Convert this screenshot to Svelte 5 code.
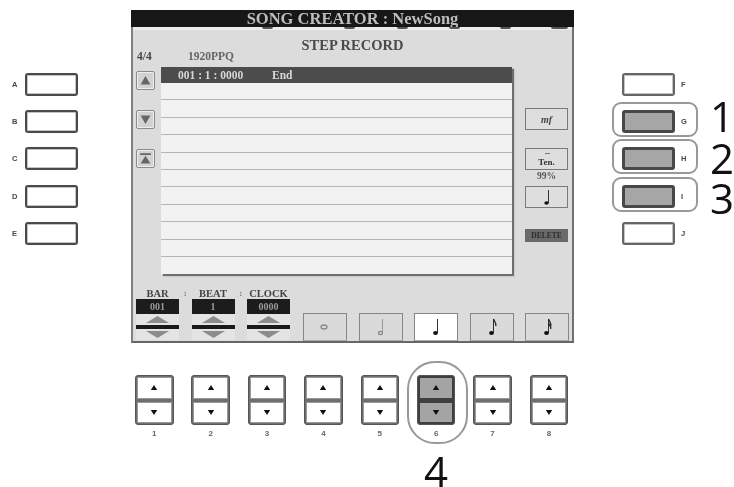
<script>
  const leftKeys = ['A', 'B', 'C', 'D', 'E'];
  const rightKeys = [
    { key: 'F' },
    { key: 'G', step: 1 },
    { key: 'H', step: 2 },
    { key: 'I', step: 3 },
    { key: 'J' }
  ];
  const params = [
    { label: 'BAR', value: '001' },
    { label: 'BEAT', value: '1' },
    { label: 'CLOCK', value: '0000' }
  ];
  const notes = ['whole', 'half', 'quarter', 'eighth', 'sixteenth'];
  const rows = Array.from({ length: 11 });
  const pads = [1, 2, 3, 4, 5, 6, 7, 8];
</script>

<div class="page">
  <div class="top">
    <div class="keys left">
      {#each leftKeys as k}
        <div class="key-row">
          <span class="key-label">{k}</span>
          <span class="key"></span>
        </div>
      {/each}
    </div>

    <div class="screen">
      <div class="title">SONG CREATOR : NewSong</div>
      <div class="tabs">
        <i style="margin-left:129px"></i>
        <i style="margin-left:71px"></i>
        <i style="margin-left:42px"></i>
        <i style="margin-left:41px"></i>
        <i style="margin-left:40px"></i>
        <i style="margin-left:40px;width:17px"></i>
      </div>
      <div class="sub">STEP RECORD</div>
      <div class="meta"><span class="sig">4/4</span><span>1920PPQ</span></div>

      <div class="main">
        <div class="rail-left">
          <button class="arrow" aria-label="up">
            <svg viewBox="0 0 19 19"><path d="M9.5 4.5 15 14H4z" /></svg>
          </button>
          <button class="arrow" aria-label="down">
            <svg viewBox="0 0 19 19"><path d="M4 5h11L9.5 14.5z" /></svg>
          </button>
          <button class="arrow" aria-label="top">
            <svg viewBox="0 0 19 19"><path d="M3.500 3.500h12v2h-12zM9.500 6.500 15 15H4z" /></svg>
          </button>
        </div>

        <div class="list">
          <div class="list-head"><span class="pos">001 : 1 : 0000</span><span>End</span></div>
          {#each rows as _}
            <div class="list-row"></div>
          {/each}
        </div>

        <div class="rail-right">
          <button class="soft mf">mf</button>
          <button class="soft ten"><span class="dash"></span>Ten.</button>
          <div class="pct">99%</div>
          <button class="soft len" aria-label="note length">
            <svg viewBox="0 0 41 20"><path class="stem" d="M22.500 3v13" /><ellipse cx="20.500" cy="16" rx="2.200" ry="1.800" /></svg>
          </button>
          <div class="del">DELETE</div>
        </div>
      </div>

      <div class="bottom">
        {#each params as p, i}
          {#if i > 0}<span class="colon">:</span>{/if}
          <div class="param">
            <div class="param-label">{p.label}</div>
            <div class="param-value">{p.value}</div>
            <div class="spin"><svg viewBox="0 0 43 11"><path d="M21.500 2 33 9H10z" /></svg></div>
            <div class="param-bar"></div>
            <div class="spin"><svg viewBox="0 0 43 11"><path d="M10 2h23L21.500 9z" /></svg></div>
          </div>
        {/each}
        <div class="notes">
          {#each notes as n}
            <div class="note" class:on={n === 'quarter'} class:dim={n === 'whole' || n === 'half'}>
              <svg viewBox="0 0 42 26">
                {#if n === 'whole'}
                  <ellipse class="open" cx="20" cy="13" rx="3" ry="2" />
                {:else}
                  <path class="stem" d="M22.500 5v14" />
                  {#if n === 'half'}
                    <ellipse class="open" cx="20.500" cy="19" rx="2" ry="1.600" />
                  {:else}
                    <ellipse cx="20.500" cy="19" rx="2.400" ry="1.900" />
                  {/if}
                  {#if n === 'eighth' || n === 'sixteenth'}
                    <path class="flag" d="M22.500 5c1 3 3 3.500 2.200 7" />
                  {/if}
                  {#if n === 'sixteenth'}
                    <path class="flag" d="M22.500 9c1 3 3 3 2.200 6" />
                  {/if}
                {/if}
              </svg>
            </div>
          {/each}
        </div>
      </div>
    </div>

    <div class="keys right">
      {#each rightKeys as k}
        <div class="key-row">
          <span class="key" class:active={k.step}></span>
          <span class="key-label">{k.key}</span>
          {#if k.step}
            <span class="ring"></span>
            <span class="step s{k.step}">{k.step}</span>
          {/if}
        </div>
      {/each}
    </div>
  </div>

  <div class="pads">
    {#each pads as n}
      <div class="pad-col">
        <div class="pad" class:active={n === 6}>
          <div class="cell"><svg viewBox="0 0 10 8"><path d="M5 1 9 7H1z" /></svg></div>
          <div class="cell"><svg viewBox="0 0 10 8"><path d="M1 1h8L5 7z" /></svg></div>
        </div>
        <div class="pad-label">{n}</div>
        {#if n === 6}
          <span class="pad-ring"></span>
          <span class="step four">4</span>
        {/if}
      </div>
    {/each}
  </div>
</div>

<style>
  :global(body) {
    margin: 0;
    background: #fff;
  }

  .page {
    width: 734px;
    height: 487px;
    overflow: hidden;
    background: #fff;
    padding-top: 10px;
    box-sizing: border-box;
    font-family: "Liberation Serif", serif;
    filter: blur(0.6px);
  }

  .top {
    display: flex;
  }

  /* side keys */
  .keys {
    display: flex;
    flex-direction: column;
    gap: 14.2px;
    padding-top: 63px;
    box-sizing: border-box;
  }

  .keys.left {
    width: 131px;
    padding-left: 12px;
  }

  .keys.right {
    width: 160px;
    padding-left: 48px;
  }

  .key-row {
    position: relative;
    display: flex;
    align-items: center;
    height: 23px;
  }

  .key {
    width: 53px;
    height: 23px;
    box-sizing: border-box;
    border: 2px solid #4a4a4a;
    border-radius: 3px;
    background: #fff;
    box-shadow: inset 0 0 0 1px #c4c4c4;
  }

  .keys.right .key {
    border-color: #666;
  }

  .keys.right .key.active {
    border: 3px solid #484848;
    background: #a6a6a6;
    box-shadow: none;
  }

  .key-label {
    width: 13px;
    font: bold 7.500px "Liberation Sans", sans-serif;
    color: #444;
  }

  .keys.right .key-label {
    width: auto;
    margin-left: 6px;
  }

  .ring {
    position: absolute;
    left: -10px;
    top: -8px;
    width: 86px;
    height: 35px;
    box-sizing: border-box;
    border: 2px solid #999;
    border-radius: 9px;
  }

  .step {
    position: absolute;
    font: 400 42px/30px "Open Sans", sans-serif;
    color: #111;
  }

  .keys .step {
    left: 88px;
  }

  .s1 {
    top: -9px;
  }

  .s2 {
    top: -4px;
  }

  .s3 {
    top: -2px;
  }

  /* screen */
  .screen {
    width: 443px;
    height: 333px;
    box-sizing: border-box;
    background: #dcdcdc;
    border-left: 2px solid #808080;
    border-right: 2px solid #707070;
    border-bottom: 2px solid #666;
  }

  .title {
    height: 17px;
    margin-left: -2px;
    margin-right: -2px;
    background: #171717;
    color: #bdbdbd;
    font-size: 16.500px;
    font-weight: bold;
    line-height: 17px;
    text-align: center;
    white-space: pre;
  }

  .tabs {
    display: flex;
    height: 3px;
    background: #ececec;
  }

  .tabs i {
    display: block;
    width: 11px;
    height: 2px;
    background: #555;
    border-radius: 0 0 3px 3px;
  }

  .sub {
    margin-top: 8px;
    font-size: 14.500px;
    line-height: 14px;
    font-weight: bold;
    text-align: center;
    color: #4a4a4a;
  }

  .meta {
    display: flex;
    height: 12px;
    margin-top: -2px;
    padding-left: 4px;
    font-size: 11.500px;
    line-height: 12px;
    font-weight: bold;
    color: #666;
  }

  .sig {
    width: 51px;
    color: #444;
  }

  .main {
    display: flex;
    height: 211px;
    margin-top: 5px;
  }

  .rail-left {
    width: 28px;
    box-sizing: border-box;
    padding: 4px 0 0 3px;
    display: flex;
    flex-direction: column;
    gap: 20px;
  }

  .arrow {
    width: 19px;
    height: 19px;
    padding: 0;
    box-sizing: border-box;
    border: 1px solid #8b8b8b;
    border-radius: 2px;
    background: #d2d2d2;
    box-shadow: inset 0 0 0 1px #eee;
  }

  .arrow svg {
    display: block;
    width: 100%;
    height: 100%;
    fill: #666;
  }

  .list {
    width: 351px;
    height: 207px;
    background: #f2f2f2;
    box-shadow: 2px 2px 1px #6f6f6f;
  }

  .list-head {
    display: flex;
    height: 16px;
    background: #4c4c4c;
    color: #d8d8d8;
    font-size: 11.500px;
    font-weight: bold;
    line-height: 16px;
    padding-left: 17px;
    white-space: nowrap;
  }

  .pos {
    width: 94px;
  }

  .list-row {
    height: 17.4px;
    box-sizing: border-box;
    border-bottom: 1px solid #b5b5b5;
  }

  .list-row:last-child {
    border-bottom: none;
  }

  .rail-right {
    padding: 41px 0 0 13px;
    display: flex;
    flex-direction: column;
    align-items: flex-start;
  }

  .soft {
    width: 43px;
    height: 22px;
    padding: 0;
    box-sizing: border-box;
    border: 1px solid #7a7a7a;
    background: #dedede;
    color: #444;
    font-family: "Liberation Serif", serif;
    font-weight: bold;
  }

  .mf {
    font-size: 10px;
    font-style: italic;
    margin-bottom: 18px;
  }

  .ten {
    position: relative;
    font-size: 9px;
    padding-top: 6px;
    color: #333;
  }

  .dash {
    position: absolute;
    left: 19px;
    top: 4px;
    width: 5px;
    height: 1px;
    background: #777;
  }

  .pct {
    width: 43px;
    height: 16px;
    font-size: 9.500px;
    font-weight: bold;
    line-height: 12px;
    text-align: center;
    color: #555;
  }

  .len svg {
    display: block;
    width: 41px;
    height: 20px;
  }

  .del {
    width: 43px;
    height: 13px;
    margin-top: 21px;
    background: #6a6a6a;
    color: #2c2c2c;
    font-size: 7.500px;
    font-weight: bold;
    line-height: 13px;
    text-align: center;
  }

  svg ellipse {
    fill: #111;
  }

  svg .stem {
    stroke: #333;
    stroke-width: 1;
    fill: none;
  }

  svg .flag {
    stroke: #222;
    stroke-width: 1.300;
    fill: none;
  }

  /* bottom strip */
  .bottom {
    display: flex;
    align-items: flex-start;
    height: 63px;
    padding: 10px 0 0 3px;
    box-sizing: border-box;
  }

  .param {
    width: 43px;
  }

  .colon {
    width: 12.500px;
    font-size: 9px;
    font-weight: bold;
    line-height: 11px;
    text-align: center;
    color: #777;
  }

  .param-label {
    height: 11px;
    font-size: 10.500px;
    font-weight: bold;
    line-height: 11px;
    text-align: center;
    white-space: nowrap;
    color: #444;
  }

  .param-value {
    height: 15px;
    background: #1c1c1c;
    color: #999;
    font-size: 10px;
    font-weight: bold;
    line-height: 15px;
    text-align: center;
  }

  .spin {
    height: 11px;
    background: #e4e4e4;
  }

  .spin svg {
    display: block;
    width: 43px;
    height: 11px;
    fill: #8c8c8c;
  }

  .param-bar {
    height: 4px;
    background: #1a1a1a;
  }

  .notes {
    display: flex;
    gap: 11.500px;
    margin-left: 13px;
    margin-top: 25px;
  }

  .note {
    width: 44px;
    height: 28px;
    box-sizing: border-box;
    border: 1px solid #858585;
    border-bottom-color: #aaa;
    background: #dadada;
  }

  .note.on {
    background: #fff;
  }

  .note svg {
    display: block;
    width: 42px;
    height: 26px;
  }

  .note.dim .stem {
    stroke: #999;
  }

  svg ellipse.open {
    fill: none;
    stroke: #888;
    stroke-width: 1.300;
  }

  /* 1-8 pads */
  .pads {
    display: flex;
    gap: 17.900px;
    padding: 32px 0 0 135px;
  }

  .pad-col {
    position: relative;
    width: 38.500px;
  }

  .pad {
    height: 50px;
    box-sizing: border-box;
    padding: 2px;
    border-radius: 4px;
    background: #6e6e6e;
    display: flex;
    flex-direction: column;
    gap: 3px;
    box-shadow: inset 0 0 0 1px #555;
  }

  .cell {
    flex: 1;
    display: flex;
    align-items: center;
    justify-content: center;
    background: #fff;
    box-shadow: 0 0 0 1px #999;
    margin: 1px;
  }

  .pad.active {
    background: #3f3f3f;
  }

  .pad.active .cell {
    background: #a4a4a4;
    box-shadow: none;
  }

  .cell svg {
    width: 8px;
    height: 7px;
    fill: #111;
  }

  .pad-label {
    margin-top: 4px;
    font: bold 8px/10px "Liberation Sans", sans-serif;
    text-align: center;
    color: #666;
  }

  .pad-ring {
    position: absolute;
    left: -10px;
    top: -14px;
    width: 61px;
    height: 83px;
    box-sizing: border-box;
    border: 2px solid #999;
    border-radius: 28px;
  }

  .step.four {
    left: 7px;
    top: 81px;
  }
</style>
